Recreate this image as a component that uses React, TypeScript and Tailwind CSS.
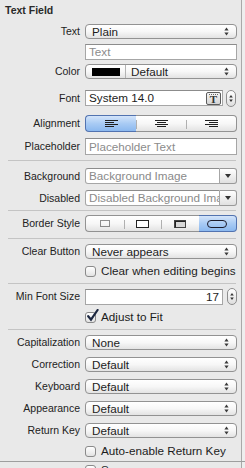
import React from 'react';

const Arrows = () => (
  <svg width="5" height="9" viewBox="0 0 5 9" className="shrink-0">
    <path d="M2.5 0.6 L4.6 3.4 L0.4 3.4 Z" fill="#3a3a3a" />
    <path d="M2.5 8.4 L4.6 5.6 L0.4 5.6 Z" fill="#3a3a3a" />
  </svg>
);

const Label = ({ children }: { children: React.ReactNode }) => (
  <div className="w-[80px] shrink-0 text-right text-[10.5px] leading-none text-[#222]">{children}</div>
);

const Popup = ({ children }: { children: React.ReactNode }) => (
  <div className="flex h-full w-full items-center justify-between rounded-[4px] border border-[#929292] bg-gradient-to-b from-white via-[#f7f7f7] to-[#e3e3e3] pl-[6px] pr-[7px] text-[11.7px] leading-none text-[#1c1c1c]">
    <span>{children}</span>
    <Arrows />
  </div>
);

const Field = ({ children, muted }: { children: React.ReactNode; muted?: boolean }) => (
  <div
    className={`flex h-full w-full items-center border border-[#a6a6a6] border-t-[#8c8c8c] bg-white pl-[3px] text-[11.7px] leading-none ${
      muted ? 'text-[#8c8c8c]' : 'text-[#1c1c1c]'
    }`}
  >
    {children}
  </div>
);

const Stepper = () => (
  <div className="flex h-[17px] w-[10px] shrink-0 items-center justify-center rounded-[5px] border border-[#8e8e8e] bg-gradient-to-b from-white to-[#dedede]">
    <svg width="4" height="9" viewBox="0 0 4 9">
      <path d="M2 1 L3.8 3.4 L0.2 3.4 Z" fill="#333" />
      <path d="M2 8 L3.8 5.6 L0.2 5.6 Z" fill="#333" />
    </svg>
  </div>
);

const Combo = ({ text }: { text: string }) => (
  <div className="flex h-full w-full">
    <div className="flex min-w-0 flex-1 items-center overflow-hidden whitespace-nowrap rounded-l-[3px] border border-[#a6a6a6] border-t-[#8c8c8c] bg-white pl-[3px] text-[11.7px] leading-none text-[#8a8a8a]">
      {text}
    </div>
    <div className="flex w-[17px] shrink-0 items-center justify-center rounded-r-[3px] border border-l-0 border-[#999] bg-gradient-to-b from-white to-[#e0e0e0]">
      <svg width="6" height="4" viewBox="0 0 6 4">
        <path d="M0 0 L6 0 L3 4 Z" fill="#333" />
      </svg>
    </div>
  </div>
);

const Checkbox = ({ checked }: { checked?: boolean }) => (
  <div className="relative h-[11px] w-[11px] shrink-0 rounded-[3px] border border-[#8a8a8a] bg-gradient-to-b from-white to-[#e2e2e2]">
    {checked && (
      <svg width="13" height="13" viewBox="0 0 13 13" className="absolute left-[0px] top-[-4px]">
        <path d="M2.2 7.2 L5 10.6 L11.6 1" fill="none" stroke="#1c2740" strokeWidth="2.2" strokeLinecap="round" />
      </svg>
    )}
  </div>
);

const Separator = () => <div className="ml-[8px] mr-[5px] h-px bg-[#c4c4c4]" />;

const Segment = ({
  selected,
  first,
  last,
  children,
}: {
  selected?: boolean;
  first?: boolean;
  last?: boolean;
  children: React.ReactNode;
}) => (
  <div
    className={`relative flex flex-1 items-center justify-center border-y ${first ? 'rounded-l-[4px] border-l' : ''} ${
      last ? 'rounded-r-[4px] border-r' : ''
    } ${
      selected
        ? 'border-[#5273b0] bg-gradient-to-b from-[#d3e4fa] via-[#a9cbf4] to-[#8bb8ef]'
        : 'border-[#929292] bg-gradient-to-b from-white via-[#f7f7f7] to-[#e3e3e3]'
    }`}
  >
    {!first && !selected && <div className="absolute left-0 top-[4px] h-[9px] w-px bg-[#b0b0b0]" />}
    {children}
  </div>
);

const AlignIcon = ({ align }: { align: 'left' | 'center' | 'right' }) => {
  const short = align === 'left' ? 'M0 2.5 H9 M0 6.5 H9' : align === 'center' ? 'M2 2.5 H11 M2 6.5 H11' : 'M4 2.5 H13 M4 6.5 H13';
  return (
    <svg width="13" height="7" viewBox="0 0 13 7">
      <path d={`M0 0.5 H13 M0 4.5 H13 ${short}`} stroke="#1e1e1e" strokeWidth="1" fill="none" />
    </svg>
  );
};

export default function App() {
  return (
    <div className="relative h-[468px] w-[245px] overflow-hidden bg-[#eeeeee] font-['Liberation_Sans',Arial,sans-serif]">
      <div className="h-full w-[242px] border-r border-[#a9a9a9] bg-[#e9e9e9]">
        <div className="flex h-[16px] items-center pl-[5px] pt-[5px] text-[10.5px] font-bold leading-none text-[#2a2a2a]">
          Text Field
        </div>

        <div className="mt-[8px] flex h-[15px] items-center">
          <Label>Text</Label>
          <div className="ml-[5px] h-full w-[152px]">
            <Popup>Plain</Popup>
          </div>
        </div>

        <div className="mt-[5px] flex h-[16px] items-center">
          <div className="ml-[85px] h-full w-[152px]">
            <Field muted>Text</Field>
          </div>
        </div>

        <div className="mt-[4px] flex h-[15px] items-center">
          <Label>Color</Label>
          <div className="ml-[5px] h-full w-[152px]">
            <div className="flex h-full w-full items-center justify-between rounded-[4px] border border-[#929292] bg-gradient-to-b from-white via-[#f7f7f7] to-[#e3e3e3] pl-[6px] pr-[7px] text-[11.7px] leading-none text-[#1c1c1c]">
              <div className="flex h-full items-center">
                <div className="h-[8px] w-[28px] bg-black" />
                <div className="ml-[5px] h-full w-px bg-[#b4b4b4]" />
                <span className="ml-[5px]">Default</span>
              </div>
              <Arrows />
            </div>
          </div>
        </div>

        <div className="mt-[11px] flex h-[16px] items-center">
          <Label>Font</Label>
          <div className="ml-[5px] flex h-full w-[152px] items-center">
            <div className="h-full w-[138px]">
              <div className="flex h-full w-full items-center justify-between border border-[#a6a6a6] border-t-[#8c8c8c] bg-white pl-[3px] pr-[1px] text-[11.7px] leading-none text-[#1c1c1c]">
                <span>System 14.0</span>
                <div className="relative flex h-[13px] w-[15px] items-center justify-center rounded-[2px] border border-[#5c5c5c] bg-gradient-to-b from-[#f4f4f4] to-[#d4d4d4]">
                  <div className="absolute left-[2px] right-[2px] top-[1px] border-t border-dotted border-[#666]" />
                  <span className="mt-[2px] font-['Liberation_Serif',serif] text-[11px] font-bold leading-none text-[#333]">T</span>
                </div>
              </div>
            </div>
            <div className="ml-[3px]">
              <Stepper />
            </div>
          </div>
        </div>

        <div className="mt-[9px] flex h-[17px] items-center">
          <Label>Alignment</Label>
          <div className="ml-[5px] flex h-full w-[152px]">
            <Segment first selected>
              <AlignIcon align="left" />
            </Segment>
            <Segment>
              <AlignIcon align="center" />
            </Segment>
            <Segment last>
              <AlignIcon align="right" />
            </Segment>
          </div>
        </div>

        <div className="mt-[6px] flex h-[17px] items-center">
          <Label>Placeholder</Label>
          <div className="ml-[5px] h-full w-[152px]">
            <Field muted>Placeholder Text</Field>
          </div>
        </div>

        <div className="mt-[5px]">
          <Separator />
        </div>

        <div className="mt-[7px] flex h-[16px] items-center">
          <Label>Background</Label>
          <div className="ml-[5px] h-full w-[152px]">
            <Combo text="Background Image" />
          </div>
        </div>

        <div className="mt-[6px] flex h-[16px] items-center">
          <Label>Disabled</Label>
          <div className="ml-[5px] h-full w-[152px]">
            <Combo text="Disabled Background Image" />
          </div>
        </div>

        <div className="mt-[4px]">
          <Separator />
        </div>

        <div className="mt-[4px] flex h-[17px] items-center">
          <Label>Border Style</Label>
          <div className="ml-[5px] flex h-full w-[152px]">
            <Segment first>
              <svg width="10" height="7" viewBox="0 0 10 7">
                <rect x="0.5" y="0.5" width="9" height="6" fill="none" stroke="#222" strokeDasharray="1 1" />
              </svg>
            </Segment>
            <Segment>
              <svg width="13" height="8" viewBox="0 0 13 8">
                <rect x="0.5" y="0.5" width="12" height="7" fill="#fff" stroke="#222" />
              </svg>
            </Segment>
            <Segment>
              <svg width="12" height="8" viewBox="0 0 12 8">
                <rect x="0.5" y="0.5" width="11" height="7" fill="#d8d8d8" stroke="#444" />
                <path d="M1 1.5 H11.5 M1.5 1 V7.5" stroke="#222" />
              </svg>
            </Segment>
            <Segment last selected>
              <svg width="20" height="8" viewBox="0 0 20 8">
                <rect x="0.5" y="0.5" width="19" height="7" rx="3.5" fill="none" stroke="#1a1a2a" />
              </svg>
            </Segment>
          </div>
        </div>

        <div className="mt-[6px]">
          <Separator />
        </div>

        <div className="mt-[5px] flex h-[15px] items-center">
          <Label>Clear Button</Label>
          <div className="ml-[5px] h-full w-[152px]">
            <Popup>Never appears</Popup>
          </div>
        </div>

        <div className="ml-[85px] mt-[6px] flex h-[12px] items-center gap-[5px] text-[11.7px] leading-none text-[#1c1c1c]">
          <Checkbox />
          <span>Clear when editing begins</span>
        </div>

        <div className="mt-[6px]">
          <Separator />
        </div>

        <div className="mt-[4px] flex h-[17px] items-center">
          <Label>Min Font Size</Label>
          <div className="ml-[5px] flex h-full w-[152px] items-center">
            <div className="h-[16px] w-[138px]">
              <div className="flex h-full w-full items-center justify-end border border-[#a6a6a6] border-t-[#8c8c8c] bg-white pr-[3px] text-[11.7px] leading-none text-[#1c1c1c]">
                17
              </div>
            </div>
            <div className="ml-[4px]">
              <Stepper />
            </div>
          </div>
        </div>

        <div className="ml-[85px] mt-[6px] flex h-[12px] items-center gap-[5px] text-[11.7px] leading-none text-[#1c1c1c]">
          <Checkbox checked />
          <span>Adjust to Fit</span>
        </div>

        <div className="mt-[6px]">
          <Separator />
        </div>

        <div className="mt-[5px] flex h-[15px] items-center">
          <Label>Capitalization</Label>
          <div className="ml-[5px] h-full w-[152px]">
            <Popup>None</Popup>
          </div>
        </div>

        <div className="mt-[7px] flex h-[15px] items-center">
          <Label>Correction</Label>
          <div className="ml-[5px] h-full w-[152px]">
            <Popup>Default</Popup>
          </div>
        </div>

        <div className="mt-[7px] flex h-[15px] items-center">
          <Label>Keyboard</Label>
          <div className="ml-[5px] h-full w-[152px]">
            <Popup>Default</Popup>
          </div>
        </div>

        <div className="mt-[7px] flex h-[15px] items-center">
          <Label>Appearance</Label>
          <div className="ml-[5px] h-full w-[152px]">
            <Popup>Default</Popup>
          </div>
        </div>

        <div className="mt-[7px] flex h-[15px] items-center">
          <Label>Return Key</Label>
          <div className="ml-[5px] h-full w-[152px]">
            <Popup>Default</Popup>
          </div>
        </div>

        <div className="ml-[85px] mt-[7px] flex h-[12px] items-center gap-[5px] text-[11.7px] leading-none text-[#1c1c1c]">
          <Checkbox />
          <span>Auto-enable Return Key</span>
        </div>

        <div className="ml-[85px] mt-[7px] flex h-[12px] items-center gap-[5px] text-[11.7px] leading-none text-[#1c1c1c]">
          <Checkbox />
          <span>Secure</span>
        </div>
      </div>
      <div className="absolute left-0 right-0 top-[461px] h-px bg-[#9e9e9e]" />
    </div>
  );
}
